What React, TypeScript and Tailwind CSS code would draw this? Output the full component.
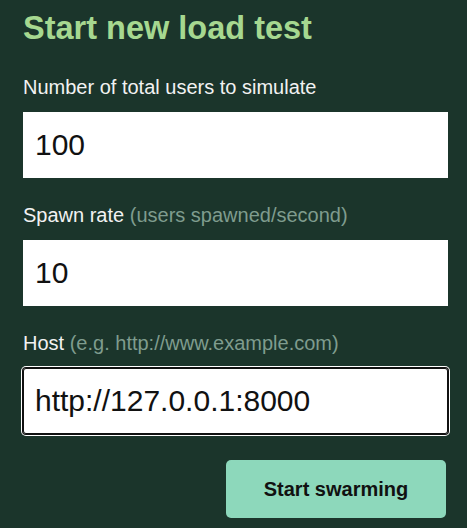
import React from 'react';

interface FieldProps {
  label: string;
  hint?: string;
  value: string;
  focused?: boolean;
}

function Field({ label, hint, value, focused }: FieldProps) {
  return (
    <div className="flex flex-col">
      <label className="text-[20px] leading-[24px] text-[#f2f2f2]">
        {label}
        {hint && <span className="text-[#7f9c8e]"> {hint}</span>}
      </label>
      <input
        readOnly
        value={value}
        className={
          "mt-[13px] h-[66px] w-full bg-white px-[12px] font-['Liberation_Sans',Arial,sans-serif] text-[30px] text-[#111] outline-none " +
          (focused
            ? 'rounded-[3px] shadow-[0_0_0_1px_#111,0_0_0_2px_#fff,inset_0_0_0_1px_#111]'
            : '')
        }
      />
    </div>
  );
}

export default function App() {
  return (
    <div className="min-h-screen bg-[#1b352b] pl-[23px] pr-[19px] pt-[9px] font-['Liberation_Sans',Arial,sans-serif]">
      <h1 className="text-[32.5px] leading-[38px] font-bold text-[#a6d890]">
        Start new load test
      </h1>

      <form className="mt-[28px] flex flex-col gap-[25px]">
        <Field label="Number of total users to simulate" value="100" />
        <Field label="Spawn rate" hint="(users spawned/second)" value="10" />
        <Field
          label="Host"
          hint="(e.g. http://www.example.com)"
          value="http://127.0.0.1:8000"
          focused
        />
      </form>

      <div className="mt-[26px] flex justify-end pr-[2px]">
        <button
          type="button"
          className="h-[58px] w-[220px] rounded-[5px] bg-[#8dd8bb] font-['Liberation_Sans',Arial,sans-serif] text-[20px] font-bold text-[#111]"
        >
          Start swarming
        </button>
      </div>
    </div>
  );
}
